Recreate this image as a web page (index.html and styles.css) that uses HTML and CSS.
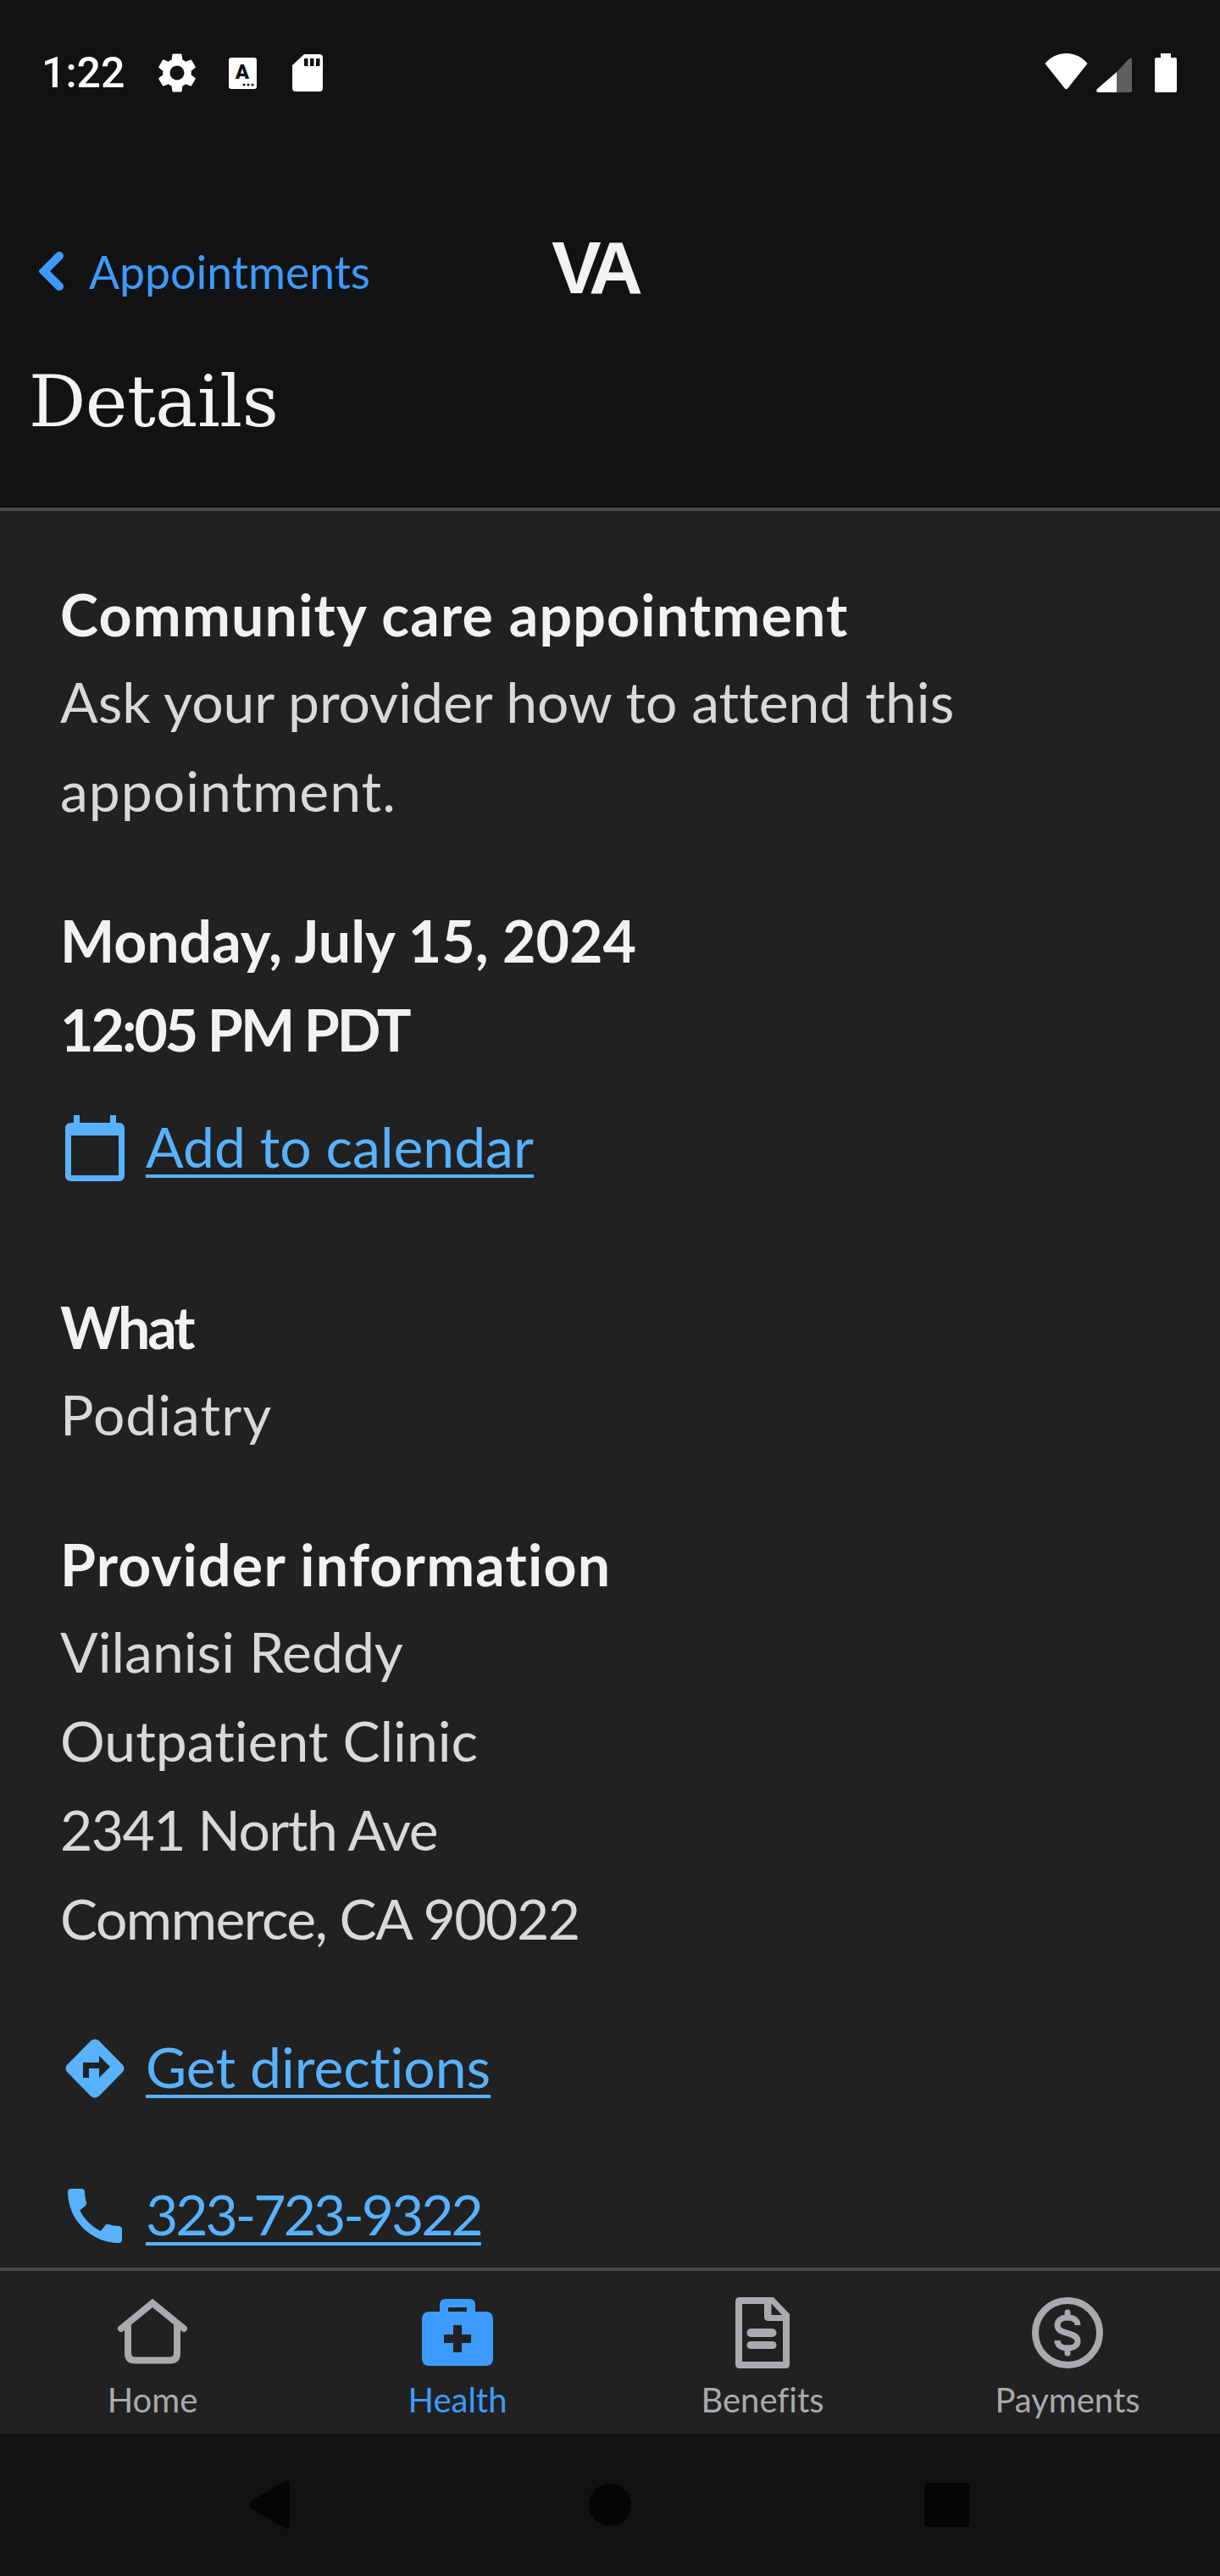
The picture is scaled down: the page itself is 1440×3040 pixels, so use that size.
FILE: index.html
```html
<!DOCTYPE html>
<html lang="en">
<head>
    <meta charset="UTF-8">
    <meta name="viewport" content="width=device-width, initial-scale=1.0">
    <title>Details</title>
    <link rel="stylesheet" href="styles.css">
</head>
<body>
    <div class="screen">
        <header class="top">
            <div class="status-bar">
                <span class="time">1:22</span>
                <svg class="ic-gear" viewBox="0 0 24 24"><path fill="#fff" d="M19.14 12.94c.04-.3.06-.61.06-.94 0-.32-.02-.64-.07-.94l2.03-1.58c.18-.14.23-.41.12-.61l-1.92-3.32c-.12-.22-.37-.29-.59-.22l-2.39.96c-.5-.38-1.03-.7-1.62-.94l-.36-2.54c-.04-.24-.24-.41-.48-.41h-3.84c-.24 0-.43.17-.47.41l-.36 2.54c-.59.24-1.13.57-1.62.94l-2.39-.96c-.22-.08-.47 0-.59.22L2.74 8.87c-.12.21-.08.47.12.61l2.03 1.58c-.05.3-.09.63-.09.94s.02.64.07.94l-2.03 1.58c-.18.14-.23.41-.12.61l1.92 3.32c.12.22.37.29.59.22l2.39-.96c.5.38 1.03.7 1.62.94l.36 2.54c.05.24.24.41.48.41h3.84c.24 0 .44-.17.47-.41l.36-2.54c.59-.24 1.13-.56 1.62-.94l2.39.96c.22.08.47 0 .59-.22l1.92-3.32c.12-.22.07-.47-.12-.61l-2.01-1.58zM12 15.6c-1.98 0-3.6-1.62-3.6-3.6s1.62-3.6 3.6-3.6 3.6 1.62 3.6 3.6-1.62 3.6-3.6 3.6z"/></svg>
                <svg class="ic-a" viewBox="0 0 33 37">
                    <rect width="33" height="37" rx="3" fill="#fff"/>
                    <text x="16" y="25" text-anchor="middle" class="ic-a-letter">A</text>
                    <circle cx="18" cy="32" r="1.5" fill="#121212"/>
                    <circle cx="23" cy="32" r="1.5" fill="#121212"/>
                    <circle cx="28" cy="32" r="1.5" fill="#121212"/>
                </svg>
                <svg class="ic-sd" viewBox="0 0 36 44">
                    <path fill="#fff" d="M14 0H32Q36 0 36 4V40Q36 44 32 44H4Q0 44 0 40V13Z"/>
                    <rect x="14" y="5" width="4.5" height="9" fill="#121212"/>
                    <rect x="21" y="5" width="4.5" height="9" fill="#121212"/>
                    <rect x="28" y="5" width="4.5" height="9" fill="#121212"/>
                </svg>
                <div class="status-right">
                    <svg class="ic-wifi" viewBox="0 0 53 43"><path fill="#fff" d="M1.5 12C8 4 17 0 26.5 0S45 4 51.5 12L28.5 41Q26.5 43.5 24.5 41Z"/></svg>
                    <svg class="ic-signal" viewBox="0 0 42 42">
                        <path fill="#5f5f5f" d="M24 18L39 2Q42 0 42 3V40Q42 42 40 42H24Z"/>
                        <path fill="#fff" d="M24 18V42H2Q-1 41 1 38Z"/>
                    </svg>
                    <svg class="ic-battery" viewBox="0 0 26 46"><path fill="#fff" d="M7 0H19V5H24Q26 5 26 7V44Q26 46 24 46H2Q0 46 0 44V7Q0 5 2 5H7Z"/></svg>
                </div>
            </div>
            <div class="nav-row">
                <a class="back-link" href="#">
                    <svg class="ic-chevron" viewBox="0 0 29 46"><path d="M24 5L6 23L24 41" fill="none" stroke="#3d9bff" stroke-width="10" stroke-linecap="round" stroke-linejoin="miter"/></svg>
                    <span>Appointments</span>
                </a>
                <span class="logo">VA</span>
            </div>
            <h1>Details</h1>
        </header>

        <main class="content">
            <section class="block">
                <h2 class="wide">Community care appointment</h2>
                <p>Ask your provider how to attend this</p>
                <p class="spaced">appointment.</p>
            </section>

            <section class="block">
                <h2>Monday, July 15, 2024</h2>
                <h2 class="narrow">12:05 PM PDT</h2>
            </section>

            <a class="action action-calendar" href="#">
                <svg viewBox="0 0 70 78">
                    <path fill="#58b2ff" fill-rule="evenodd" d="M10 0H17V9H53V0H60V9H63Q70 9 70 16V71Q70 78 63 78H7Q0 78 0 71V16Q0 9 7 9H10ZM7 24V71H63V24Z"/>
                </svg>
                <span>Add to calendar</span>
            </a>

            <section class="block block-what">
                <h2 class="narrow">What</h2>
                <p class="spaced">Podiatry</p>
            </section>

            <section class="block">
                <h2 class="wide">Provider information</h2>
                <p>Vilanisi Reddy</p>
                <p>Outpatient Clinic</p>
                <p class="digits">2341 North Ave</p>
                <p class="digits">Commerce, CA 90022</p>
            </section>

            <a class="action action-directions" href="#">
                <svg viewBox="0 0 70 70">
                    <path fill="#58b2ff" d="M30.5 2Q35 -1 39.500 2L68 31Q71 35 68 39L39.500 68Q35 71 30.500 68L2 39Q-1 35 2 31Z"/>
                    <path fill="#212121" d="M21 28H40V20L53 33L40 46V35H28V46H21Z"/>
                </svg>
                <span>Get directions</span>
            </a>

            <a class="action action-phone" href="#">
                <svg viewBox="3 3 18 18"><path fill="#58b2ff" d="M20.01 15.38c-1.23 0-2.42-.2-3.53-.56-.35-.12-.74-.03-1.01.24l-1.57 1.97c-2.83-1.35-5.48-3.9-6.89-6.83l1.95-1.66c.27-.28.35-.67.24-1.02-.37-1.11-.56-2.3-.56-3.53 0-.54-.45-.99-.99-.99H4.19C3.65 3 3 3.24 3 3.99 3 13.28 10.73 21 20.01 21c.71 0 .99-.63.99-1.18v-3.45c0-.54-.45-.99-.99-.99z"/></svg>
                <span>323-723-9322</span>
            </a>
        </main>

        <nav class="tabs">
            <a class="tab" href="#">
                <svg viewBox="0 0 84 84" fill="none" stroke="#a9aaae">
                    <path stroke-width="8" stroke-linecap="round" d="M5 37L42 7L79 37"/>
                    <path stroke-width="8" d="M13 30V66Q13 74.500 21.500 74.500H62.500Q71 74.500 71 66V30"/>
                </svg>
                <span>Home</span>
            </a>
            <a class="tab tab-active" href="#">
                <svg viewBox="0 0 84 84">
                    <path fill="#3d9bff" d="M21 17V9Q21 2 28 2H56Q63 2 63 9V17H75Q84 17 84 26V72Q84 81 75 81H9Q0 81 0 72V26Q0 17 9 17Z"/>
                    <rect x="31" y="12" width="22" height="5" fill="#212121"/>
                    <path fill="#212121" d="M37 33H47V44H58V54H47V65H37V54H26V44H37Z"/>
                </svg>
                <span>Health</span>
            </a>
            <a class="tab" href="#">
                <svg viewBox="0 0 84 84">
                    <path fill="#a9aaae" fill-rule="evenodd" d="M15 0H55L74 20V79Q74 84 69 84H15Q10 84 10 79V5Q10 0 15 0ZM18 8V76H66V28H49Q44 28 44 23V8ZM52.500 7.500V21H65Z"/>
                    <rect x="23.500" y="37" width="35" height="10" rx="5" fill="#a9aaae"/>
                    <rect x="23.500" y="52" width="35" height="9" rx="4.500" fill="#a9aaae"/>
                </svg>
                <span>Benefits</span>
            </a>
            <a class="tab" href="#">
                <svg viewBox="0 0 84 84" fill="none" stroke="#a9aaae">
                    <circle cx="42" cy="42" r="38" stroke-width="8"/>
                    <path stroke-width="7" d="M54 33C54 27 49 24 42 24C34 24 30 28 30 33C30 39 36 41 42 42.500C48 44 54 46 54 52C54 57 49 60 42 60C35 60 30 57 30 51"/>
                    <path stroke-width="7" stroke-linecap="round" d="M42 18V24M42 60V66"/>
                </svg>
                <span>Payments</span>
            </a>
        </nav>

        <div class="system-nav">
            <svg class="sys-back" viewBox="0 0 50 56"><path fill="#050505" d="M42 1Q49 -2 49 5V51Q49 58 42 55L3 32Q-1 28 3 24Z"/></svg>
            <div class="sys-home"></div>
            <div class="sys-recent"></div>
        </div>
    </div>
</body>
</html>
```

FILE: styles.css
```css
* {
    box-sizing: border-box;
}

html, body {
    margin: 0;
    padding: 0;
}

body {
    font-family: Lato, "Noto Sans", sans-serif;
    font-variant-ligatures: none;
    background-color: #121212;
}

svg {
    display: block;
    flex-shrink: 0;
}

.screen {
    width: 1440px;
    height: 3040px;
    display: flex;
    flex-direction: column;
    overflow: hidden;
}

.top {
    height: 603px;
    background-color: #121212;
    border-bottom: 4px solid #4a4a4a;
}

.status-bar {
    height: 172px;
    padding: 0 51px;
    display: flex;
    align-items: center;
    color: #fff;
}

.time {
    font-family: Roboto, sans-serif;
    font-size: 50px;
    font-weight: 500;
    width: 94px;
    margin-left: -2px;
    margin-right: 2px;
}

.ic-gear {
    width: 56px;
    height: 56px;
    margin-left: 36px;
}

.ic-a {
    width: 33px;
    height: 37px;
    margin-left: 33px;
}

.ic-a-letter {
    font-family: Roboto, sans-serif;
    font-size: 24px;
    font-weight: 900;
    fill: #121212;
}

.ic-sd {
    width: 36px;
    height: 44px;
    margin-left: 42px;
}

.status-right {
    margin-left: auto;
    display: flex;
    align-items: flex-end;
}

.ic-wifi {
    width: 53px;
    height: 43px;
    margin-bottom: 3px;
}

.ic-signal {
    width: 42px;
    height: 42px;
    margin-left: 9px;
}

.ic-battery {
    width: 26px;
    height: 46px;
    margin-left: 27px;
}

.nav-row {
    height: 120px;
    margin-top: 88px;
    padding-left: 46px;
    display: flex;
    align-items: center;
}

.back-link {
    display: flex;
    align-items: center;
    width: 605px;
    color: #3d9bff;
    font-size: 53.500px;
    text-decoration: none;
}

.ic-chevron {
    width: 29px;
    height: 46px;
    margin-right: 30px;
}

.logo {
    font-family: "Liberation Sans", sans-serif;
    font-weight: 700;
    font-size: 88px;
    letter-spacing: -8px;
    margin-top: -8px;
    color: #f2f2f2;
}

h1 {
    margin: 34px 0 0;
    padding-left: 34px;
    font-family: "DejaVu Serif", serif;
    font-weight: 400;
    font-size: 84px;
    line-height: 120px;
    letter-spacing: -0.500px;
    color: #f2f2f2;
}

.content {
    flex: 1;
    padding: 69px 71px 0;
    background-color: #212121;
    overflow: hidden;
}

.block {
    margin-bottom: 70px;
}

.block h2 {
    margin: 0;
    font-size: 68px;
    font-weight: 700;
    line-height: 105px;
    color: #f2f2f2;
}

.block h2.wide {
    letter-spacing: 1.200px;
}

.block h2.narrow {
    letter-spacing: -3px;
}

.block p {
    margin: 0;
    padding-bottom: 4px;
    font-size: 66px;
    line-height: 101px;
    color: #d9d9d9;
}

.block p.digits {
    letter-spacing: -1.500px;
}

.block p.spaced {
    letter-spacing: 1px;
}

.block-what {
    margin-top: 106px;
}

.action {
    display: flex;
    align-items: center;
    height: 105px;
    font-size: 66px;
    color: #58b2ff;
    text-decoration: none;
}

.action span {
    margin-top: -4px;
    text-decoration: underline;
    text-decoration-thickness: 4px;
    text-underline-offset: 8px;
}

.action svg {
    margin-left: 6px;
    margin-right: 25px;
}

.action-calendar {
    margin-top: -35px;
}

.action-calendar svg {
    width: 70px;
    height: 78px;
}

.action-directions {
    margin-bottom: 69px;
}

.action-directions svg {
    width: 70px;
    height: 70px;
}

.action-phone span {
    letter-spacing: -3px;
}

.action-phone svg {
    width: 64px;
    height: 64px;
    margin-left: 9px;
    margin-right: 28px;
}

.tabs {
    height: 196px;
    display: grid;
    grid-template-columns: repeat(4, 1fr);
    background-color: #212121;
    border-top: 4px solid #4a4a4a;
}

.tab {
    display: flex;
    flex-direction: column;
    align-items: center;
    padding-top: 31px;
    color: #a9aaae;
    font-size: 40px;
    line-height: 50px;
    text-decoration: none;
}

.tab svg {
    width: 84px;
    height: 84px;
    margin-bottom: 12px;
}

.tab-active {
    color: #3d9bff;
}

.system-nav {
    height: 168px;
    background-color: #121212;
    display: flex;
    align-items: center;
    padding: 0 0 0 293px;
}

.sys-back {
    width: 50px;
    height: 56px;
}

.sys-home {
    width: 50px;
    height: 50px;
    margin-left: 352px;
    border-radius: 50%;
    background-color: #050505;
}

.sys-recent {
    width: 53px;
    height: 52px;
    margin-left: 346px;
    border-radius: 4px;
    background-color: #050505;
}
```
